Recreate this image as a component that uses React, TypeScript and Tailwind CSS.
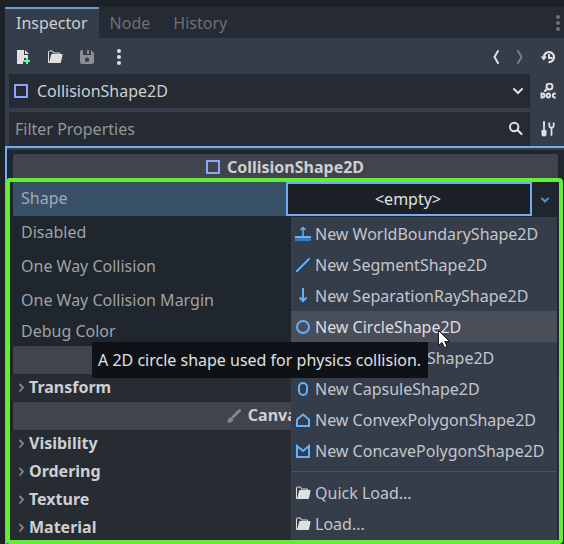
import React from "react";

type IconProps = { className?: string };

const base = "size-4 shrink-0";

function Icon({ className = "", children }: IconProps & { children: React.ReactNode }) {
  return (
    <svg viewBox="0 0 16 16" className={`${base} ${className}`} fill="none" aria-hidden="true">
      {children}
    </svg>
  );
}

const ShapeNode = () => (
  <Icon>
    <path d="M2 2h12v12H2z" stroke="#8da5f3" strokeWidth="2" />
  </Icon>
);
const NewFile = () => (
  <Icon>
    <path d="M2 1v14h6v-2.500h1V9h4V6H9V1zM10 1v4h4z" fill="#e0e0e0" />
    <path d="M11 9h2v2h2v2h-2v2h-2v-2H9v-2h2z" fill="#5fff97" />
  </Icon>
);
const Folder = () => (
  <Icon>
    <path d="M1.500 13V3a1 1 0 0 1 1-1h3l1 2h6v1.500" stroke="#e0e0e0" />
    <path d="M5.200 5h9.300a1 1 0 0 1 1 1.200L14 13.200a1 1 0 0 1-1 .8H2a1 1 0 0 1-1-1l1.500-.5L4 6a1.200 1.200 0 0 1 1.200-1z" fill="#e0e0e0" />
  </Icon>
);
const Save = () => (
  <Icon className="opacity-50">
    <path fillRule="evenodd" d="M3 1a2 2 0 0 0-2 2v10a2 2 0 0 0 2 2h10a2 2 0 0 0 2-2V4l-3-3v5H4V1zM8 8.500a2.200 2.200 0 1 1 0 4.400 2.200 2.200 0 0 1 0-4.400zM8 1h2v4H8z" fill="#e0e0e0" />
  </Icon>
);
const Dots = ({ className = "" }: IconProps) => (
  <Icon className={className}>
    <circle cx="8" cy="2" r="2" fill="currentColor" />
    <circle cx="8" cy="8" r="2" fill="currentColor" />
    <circle cx="8" cy="14" r="2" fill="currentColor" />
  </Icon>
);
const Back = () => (
  <Icon>
    <path d="M10 2 6.500 8l3.500 6" stroke="#e0e0e0" strokeWidth="2" strokeLinecap="round" />
  </Icon>
);
const Forward = () => (
  <Icon className="opacity-40">
    <path d="m6 2 3.500 6L6 14" stroke="#e0e0e0" strokeWidth="2" strokeLinecap="round" />
  </Icon>
);
const History = () => (
  <Icon>
    <path d="M4 8a5 5 0 1 1 4.500 5" stroke="#e0e0e0" strokeWidth="2.200" />
    <path d="M.5 7.500h6.500L3.800 11.500z" fill="#e0e0e0" />
    <path d="M9 5v4h3.500" stroke="#e0e0e0" strokeWidth="2" />
  </Icon>
);
const Doc = () => (
  <Icon>
    <circle cx="9.500" cy="3.600" r="3" stroke="#e0e0e0" strokeWidth="2" />
    <path d="M7.500 5.500 5 8" stroke="#e0e0e0" strokeWidth="2.200" strokeLinecap="round" />
    <path d="M1.500 10.500h1a2 2 0 0 1 0 4h-1zM8.300 10.500a1.700 2 0 1 1 0 4 1.700 2 0 0 1 0-4zM15.800 10.500h-1a1.900 1.900 0 0 0 0 4h1" stroke="#e0e0e0" strokeWidth="2" />
  </Icon>
);
const Tools = () => (
  <Icon>
    <path d="M4 1v8M11.500 7v7" stroke="#e0e0e0" strokeWidth="1.800" strokeLinecap="round" />
    <rect x="3" y="1" width="2" height="3" fill="#e0e0e0" />
    <path d="M1.500 9h5v4a2.500 2.500 0 0 1-5 0z" fill="#e0e0e0" />
    <path d="M9.300 1.500v3a2.200 2.200 0 0 0 4.400 0v-3" stroke="#e0e0e0" strokeWidth="1.800" />
  </Icon>
);
const Search = () => (
  <Icon>
    <circle cx="6.200" cy="6" r="4.200" stroke="#e0e0e0" strokeWidth="2" />
    <path d="m9.500 9 4 4" stroke="#e0e0e0" strokeWidth="2.200" strokeLinecap="round" />
  </Icon>
);
const ChevronDown = () => (
  <Icon>
    <path d="m4 6 4 4 4-4" stroke="#e0e0e0" strokeWidth="2" strokeLinecap="round" />
  </Icon>
);
const SmallChevron = () => (
  <Icon>
    <path d="m5 7.500 3 3 3-3" stroke="#5b8fc0" strokeWidth="2" strokeLinecap="round" />
  </Icon>
);
const GroupArrow = () => (
  <Icon>
    <path d="m7 5.500 3 3L7 12" stroke="#84888d" strokeWidth="1.800" strokeLinecap="round" />
  </Icon>
);
const Brush = () => (
  <Icon>
    <path d="M13.500 3.500 7 10" stroke="#84868b" strokeWidth="3" strokeLinecap="round" />
    <path d="M5 10.300 7.300 12.500C7 15 5 16 1.500 15.500c0-3 .8-5 3.500-5.200z" fill="#84868b" />
  </Icon>
);
const WorldBoundary = () => (
  <Icon>
    <path d="M0 12h16v3H0z" fill="#3f76b5" />
    <path d="M0 10h16v2H0z" fill="#5fb2ff" />
    <path d="M8 10V3M5.500 4 8 1.500 10.500 4" stroke="#5fb2ff" strokeWidth="1.500" />
  </Icon>
);
const Segment = () => (
  <Icon>
    <path d="M2 14 14 2" stroke="#5fb2ff" strokeWidth="2" strokeLinecap="round" />
  </Icon>
);
const Ray = () => (
  <Icon>
    <path d="M8 0v12M4.500 9.500 8 13l3.500-3.500" stroke="#5fb2ff" strokeWidth="2" />
  </Icon>
);
const CircleShape = () => (
  <Icon>
    <circle cx="8" cy="8" r="6" stroke="#5fb2ff" strokeWidth="2" />
  </Icon>
);
const RectangleShape = () => (
  <Icon>
    <path d="M2 3h12v10H2z" stroke="#5fb2ff" strokeWidth="2" />
  </Icon>
);
const Capsule = () => (
  <Icon>
    <rect x="4" y="2" width="8" height="12" rx="4" stroke="#5fb2ff" strokeWidth="2" />
  </Icon>
);
const Convex = () => (
  <Icon>
    <path d="M2 14V7.500l6-5 6 5V14z" stroke="#5fb2ff" strokeWidth="2" />
  </Icon>
);
const Concave = () => (
  <Icon>
    <path d="M2 14V3l6 5 6-5v11z" stroke="#5fb2ff" strokeWidth="2" />
  </Icon>
);

const shapes = [
  { label: "New WorldBoundaryShape2D", icon: <WorldBoundary /> },
  { label: "New SegmentShape2D", icon: <Segment /> },
  { label: "New SeparationRayShape2D", icon: <Ray /> },
  { label: "New CircleShape2D", icon: <CircleShape />, active: true },
  { label: "New RectangleShape2D", icon: <RectangleShape /> },
  { label: "New CapsuleShape2D", icon: <Capsule /> },
  { label: "New ConvexPolygonShape2D", icon: <Convex /> },
  { label: "New ConcavePolygonShape2D", icon: <Concave /> },
];

function MenuItem({ label, icon, active }: { label: string; icon: React.ReactNode; active?: boolean }) {
  return (
    <button
      role="menuitem"
      className={`flex h-[31px] w-full items-center gap-1 pl-1 text-left whitespace-nowrap ${
        active ? "bg-[#4a4e59] text-[#dcdee2]" : "text-[#c2c6cc]"
      }`}
    >
      {icon}
      {label}
    </button>
  );
}

function ShapeMenu() {
  return (
    <div role="menu" className="absolute top-[35px] right-0.5 bottom-0 z-10 w-[266px] bg-[#363d4a] pt-px">
      {shapes.map((s) => (
        <MenuItem key={s.label} {...s} />
      ))}
      <hr className="my-[5px] border-[#4b515d]" />
      <MenuItem label="Quick Load..." icon={<Folder />} />
      <MenuItem label="Load..." icon={<Folder />} />
    </div>
  );
}

function Group({ name }: { name: string }) {
  return (
    <button className="flex h-7 w-full items-center bg-[#272c33] pb-0.5 pl-[3px] text-left font-bold text-[#cdcfd2]">
      <GroupArrow />
      {name}
    </button>
  );
}

function Category({ children }: { children?: React.ReactNode }) {
  return (
    <div className="mx-[3px] flex h-7 items-center justify-center gap-1.5 rounded-xs bg-[#41444c] pb-0.5 font-bold text-[#cdcfd2]">
      {children}
    </div>
  );
}

function PropertyRow({ name, short }: { name: string; short?: boolean }) {
  return (
    <div className={`flex items-center pb-0.5 pl-[11px] text-[#9fa2a6] ${short ? "h-7" : "h-[34px]"}`}>{name}</div>
  );
}

export default function App() {
  return (
    <main className="flex h-screen flex-col overflow-hidden bg-[#1d2229] pt-[7px] pl-[5px] font-['Noto_Sans',sans-serif] text-base text-[#cdcfd2]">
      <div role="tablist" className="flex h-[31px] shrink-0 items-stretch bg-[#252a33] text-[#6c7076]">
        <button role="tab" aria-selected="true" className="border-t-2 border-[#6a9cca] bg-[#363d4a] px-[11px] pb-0.5 text-[#cdcfd2]">
          Inspector
        </button>
        <button role="tab" aria-selected="false" className="px-[11px]">Node</button>
        <button role="tab" aria-selected="false" className="px-3">History</button>
        <button aria-label="Dock options" className="-mr-0.5 ml-auto">
          <Dots className="text-[#6c7076]" />
        </button>
      </div>

      <div className="flex shrink-0 flex-col bg-[#363d4a] pl-1">
        <div className="flex h-9 items-center gap-4 pt-0.5 pr-2 pl-1.5">
          <button aria-label="New resource"><NewFile /></button>
          <button aria-label="Load resource"><Folder /></button>
          <button aria-label="Save resource"><Save /></button>
          <button aria-label="Resource options"><Dots className="text-[#e0e0e0]" /></button>
          <div className="ml-auto flex items-center gap-2">
            <button aria-label="Previous object"><Back /></button>
            <button aria-label="Next object"><Forward /></button>
            <button aria-label="Object history" className="ml-1"><History /></button>
          </div>
        </div>
        <div className="flex h-[34px] items-center gap-2.5 pr-2">
          <div className="flex h-full flex-1 items-center gap-2 bg-[#252a33] pr-1 pl-1">
            <ShapeNode />
            <select aria-label="Edited object" className="min-w-0 flex-1 appearance-none bg-transparent outline-none">
              <option>CollisionShape2D</option>
            </select>
            <ChevronDown />
          </div>
          <button aria-label="Open documentation"><Doc /></button>
        </div>
        <div className="mt-1 flex h-[34px] items-center gap-2.5 pr-2">
          <div className="flex h-full flex-1 items-center bg-[#252a33] pr-1.5 pl-1.5">
            <input
              aria-label="Filter Properties"
              placeholder="Filter Properties"
              className="min-w-0 flex-1 bg-transparent outline-none placeholder:text-[#93969b]"
            />
            <Search />
          </div>
          <button aria-label="Manage properties"><Tools /></button>
        </div>
      </div>

      <section className="flex min-h-0 flex-1 flex-col border-t-2 border-l-2 border-[#70aef0] bg-[#20262d]">
        <div className="h-[30px] shrink-0 border-t-2 border-[#363d4a] pt-1 pr-1.5 pl-1.5">
          <div className="flex h-[26px] items-center justify-center gap-1.5 rounded-xs bg-[#41444c] pr-0.5 font-bold">
            <ShapeNode />
            CollisionShape2D
          </div>
        </div>

        <div className="relative mr-px -ml-px min-h-0 flex-1 rounded-sm border-4 border-[#61ee35]">
          <div className="h-full overflow-hidden">
            <div className="flex h-[34px]">
              <div className="ml-[3px] flex w-[273px] items-center rounded-l-xs bg-[#385068] pb-0.5 pl-2 text-[#a0abb5]">
                Shape
              </div>
              <button aria-haspopup="menu" className="flex-1 border-2 border-[#70aef0] bg-[#1c2128] pr-0.5 text-[#e0e0e0]">
                &lt;empty&gt;
              </button>
              <button aria-label="Shape options" className="flex w-[27px] items-center justify-center pr-0.5">
                <SmallChevron />
              </button>
            </div>
            <PropertyRow name="Disabled" />
            <PropertyRow name="One Way Collision" />
            <PropertyRow name="One Way Collision Margin" />
            <PropertyRow name="Debug Color" short />
            <Category />
            <Group name="Transform" />
            <Category>
              <Brush />
              CanvasItem
            </Category>
            <Group name="Visibility" />
            <Group name="Ordering" />
            <Group name="Texture" />
            <Group name="Material" />
          </div>

          <ShapeMenu />

          <div role="tooltip" className="absolute top-40 left-[82px] z-20 flex h-9 items-center bg-[#0e1216] pr-[7px] pl-1.5 whitespace-nowrap text-[#e0e0e0]">
            A 2D circle shape used for physics collision.
          </div>
          <svg viewBox="0 0 14 20" className="absolute top-[147px] left-[427px] z-30 h-5 w-3.5" aria-hidden="true">
            <path d="M1.500 1.500v15l3.500-3 2.500 5 2.500-1-2.200-5h4.700z" fill="#fff" stroke="#16191f" />
          </svg>
        </div>
      </section>
    </main>
  );
}
